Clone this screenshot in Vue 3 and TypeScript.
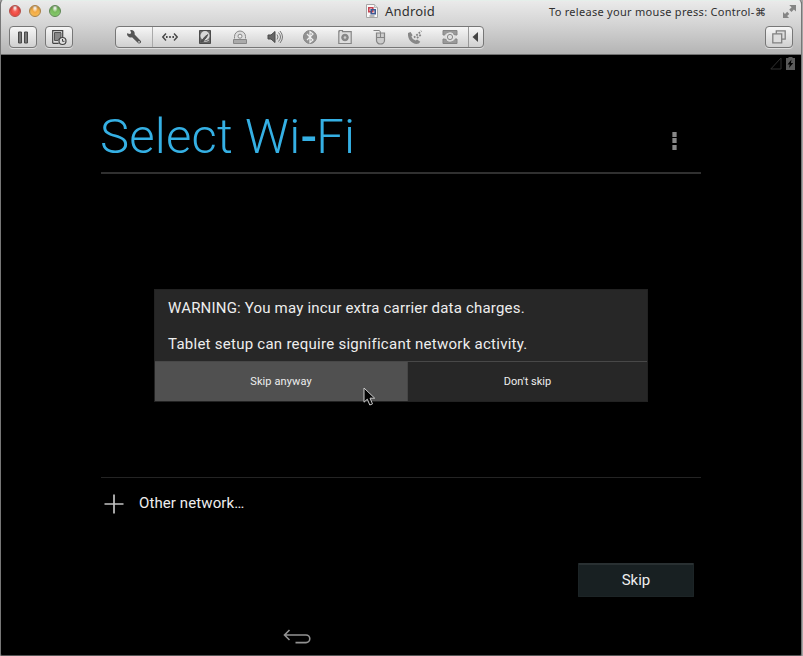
<script setup lang="ts">
const lights: string[] = ['red', 'amber', 'green']
const devices: string[] = ['network', 'disk', 'optical', 'sound', 'bluetooth', 'camera', 'mouse', 'phone', 'share']
</script>

<template>
  <div class="window">
    <header class="chrome">
      <div class="titlebar">
        <div class="lights">
          <i v-for="l in lights" :key="l" class="light" :class="l"></i>
        </div>
        <div class="title">
          <svg width="12" height="14" viewBox="0 0 12 14">
            <path d="M.5.5h8l3 3v10H.5z" fill="#f8f8f8" stroke="#a6a6a6" />
            <path d="M8.5.5v3h3" fill="#ddd" stroke="#aaa" stroke-width=".7" />
            <path d="M2.8 3.8h4v4h-4z" fill="none" stroke="#c64250" stroke-width="1.6" />
            <path d="M5.2 5.8h4v4h-4z" fill="none" stroke="#3c5790" stroke-width="1.6" />
            <path d="M3.5 12h5" stroke="#777" />
          </svg>
          <span>Android</span>
        </div>
        <div class="hint">To release your mouse press: Control-⌘</div>
        <svg class="expand" width="15" height="15" viewBox="0 0 15 15" fill="#858585">
          <path d="M7.2 1H14v6.5l-2.1-2.1L9.5 8 7.2 5.7l2.4-2.4zM1 8l2 2 2.2-2.2 2.1 2.1L5.1 12l2 2H1z" />
        </svg>
      </div>
      <div class="toolbar">
        <button class="btn pause" aria-label="Pause">
          <svg width="12" height="13" viewBox="0 0 12 13"><path d="M1.5 1h3v11h-3zM7.5 1h3v11h-3z" fill="#777" stroke="#484848" /></svg>
        </button>
        <button class="btn snap" aria-label="Snapshot">
          <svg width="16" height="17" viewBox="0 0 16 17">
            <path d="M1.7 14.3V1.7h10v7M1.7 14.3h6" fill="none" stroke="#444" stroke-width="1.2" />
            <path d="M3.5 3.5h6.5V8L7 11.5H3.5z" fill="#888" stroke="#555" />
            <circle cx="11.5" cy="12" r="3.5" fill="#ddd" stroke="#444" stroke-width="1.2" />
            <path d="M11.5 10v2.3h2" fill="none" stroke="#444" />
          </svg>
        </button>
        <div class="group">
          <span class="cell first">
            <svg width="16" height="16" viewBox="0 0 16 16"><path d="M1 4.2 4 5.1 5.2 3.9 4.2 1.2C7 .5 9.2 2.6 8.6 5.5l6 6.2c1.6 1.7-1 4-2.6 2.3L6 8.2C3.2 9.2.6 7 1 4.2z" fill="#555" /><circle cx="13" cy="12.9" r=".8" fill="#ddd" /></svg>
          </span>
          <span v-for="d in devices" :key="d" class="cell">
            <svg width="18" height="18" viewBox="0 0 18 18" fill="none" stroke="#858585">
              <g v-if="d === 'network'" stroke="#494949" stroke-width="1.5"><path d="M5 5.5 1.8 9 5 12.5M13 5.5 16.2 9 13 12.5" /><path d="M5 9h1.6M8.2 9h1.6M11.4 9H13" stroke-width="1.8" /></g>
              <g v-else-if="d === 'disk'"><path d="M3.5 2.5h11v13h-11z" fill="#666" stroke="#4b4b4b" /><circle cx="9" cy="7.7" r="4.6" fill="#d8d8d8" stroke="none" /><path d="m4.8 13.8 4-5 3-2.3-1.5 3.2-4.2 4.3z" fill="#555" stroke="#4b4b4b" stroke-width=".8" /><path d="M8 13.2q3 .8 5-1.2" stroke="#ccc" /></g>
              <g v-else-if="d === 'optical'" stroke="#888"><path d="M3.5 10.5v-2a5.5 5.5 0 0 1 11 0v2" fill="#ddd" /><circle cx="9" cy="8.2" r="2" fill="#eee" /><path d="M2.5 11.5h13v4h-13z" fill="#aaa" /></g>
              <g v-else-if="d === 'sound'" stroke="#777"><path d="M2 7h3l4-3.5v11L5 11H2z" fill="#666" stroke="#4a4a4a" /><path d="M11 6.5q2 2.5 0 5M12.5 4.5q4 4.5 0 9M14 3q5 6 0 12" /></g>
              <g v-else-if="d === 'bluetooth'"><circle cx="9" cy="9" r="6.5" fill="#929292" stroke="#858585" /><path d="m6 6 6 6-3 2.4V3.6L12 6l-6 6" stroke="#eee" stroke-width="1.2" /></g>
              <g v-else-if="d === 'camera'"><path d="M3.2 2.5h3.3v1.2h8.7v11.8H2.8V3.7h.4z" fill="#ddd" stroke-width="1.2" /><circle cx="9" cy="9.5" r="3.3" fill="#888" /><circle cx="9" cy="9.5" r="1.3" fill="#ccc" stroke="none" /></g>
              <g v-else-if="d === 'mouse'"><path d="M2.5 2.5H8q1.5 0 1.5 2.5" /><path d="M5.5 5h8v7.5a4 3.5 0 0 1-8 0z" fill="#ccc" stroke-width="1.2" /><path d="M9.5 5v4.5M5.5 9.5h8" /></g>
              <g v-else-if="d === 'phone'"><path d="M2 5 4.6 4l2 3.2-1.2 1.3q.8 3 4.2 4l1.5-1 3.2 2.3-1.5 1.8C7.3 17.4 1.2 12 2 5z" fill="#888" stroke="none" /><path d="M8 9.5 15.5 3M11 10l4-3.5" stroke-width="1.8" stroke-dasharray="1.8 1.3" /></g>
              <g v-else><path d="M2 2.5h14V7h-2.5A5 5 0 0 0 4.5 7H2zM2 15.5h14V11h-2.5a5 5 0 0 1-9 0H2z" fill="#999" stroke="#858585" /><path d="M4 10.5a5 5 0 0 1 8-4.5M14 7.5a5 5 0 0 1-8 4.5" stroke="#ddd" stroke-width="1.2" /><circle cx="9" cy="9" r="2.6" fill="#e0e0e0" stroke="#888" /></g>
            </svg>
          </span>
          <span class="cell last"><svg width="6" height="10" viewBox="0 0 6 10"><path d="M6 0v10L.5 5z" fill="#444" /></svg></span>
        </div>
        <button class="btn unity" aria-label="Unity">
          <svg width="14" height="14" viewBox="0 0 14 14" fill="#ddd" stroke="#808080" stroke-width="1.3"><path d="M4.3.8h8.9v8.4H4.3z" /><path d="M.8 3.8h8.9v9H.8z" /></svg>
        </button>
      </div>
    </header>

    <main class="screen">
      <div class="status">
        <svg width="12" height="13" viewBox="0 0 12 13"><path d="M11 1v11H.8z" fill="none" stroke="#303030" /></svg>
        <svg width="9" height="13" viewBox="0 0 9 13"><path d="M2.5 0h4v1H9v12H0V1h2.5z" fill="#5a5a5a" /><path d="M5.5 2.5 1.5 7.5h2.3L3 11l4.2-5H4.9z" fill="#000" /></svg>
      </div>
      <section class="setup">
        <div class="heading">
          <h1>Select Wi<span class="dash">-</span>Fi</h1>
          <span class="more"><i></i><i></i><i></i></span>
        </div>
        <div class="networks">
          <div class="dialog">
            <div class="message">
              <p class="warn">WARNING: You may incur extra carrier data charges.</p>
              <p class="need">Tablet setup can require significant network activity.</p>
            </div>
            <div class="choices">
              <button class="choice active"><span>Skip anyway</span>
                <svg class="pointer" width="13" height="20" viewBox="0 0 13 20"><path d="M1 1v14.2l3.3-3 2.5 5.8 2.7-1.1L7 11.2h4.7z" fill="#050505" stroke="#ccc" /></svg>
              </button>
              <button class="choice"><span>Don't skip</span></button>
            </div>
          </div>
        </div>
        <div class="other">
          <svg width="20" height="20" viewBox="0 0 20 20"><path d="M10 .5v19M.5 10h19" stroke="#c2c2c2" stroke-width="1.7" /></svg>
          <span>Other network…</span>
        </div>
        <div class="actions"><button class="skip"><span>Skip</span></button></div>
      </section>
      <nav class="navbar">
        <svg width="28" height="16" viewBox="0 0 28 16"><path d="M1.5 6H23a3.8 3.8 0 0 1 0 7.6H12.5M6.5 1l-5 5 5 5" fill="none" stroke="#929292" stroke-width="1.6" /></svg>
      </nav>
    </main>
  </div>
</template>

<style>
body { background: #a5a5a5; overflow: hidden; }
</style>

<style scoped>
* { box-sizing: border-box; }
button { padding: 0; margin: 0; border: 0; font: inherit; color: inherit; }
svg { display: block; flex: none; }
.window { width: 802px; height: 656px; border-left: 1px solid #777; border-right: 1px solid #777; border-bottom: 1px solid #555; border-radius: 4px 4px 2px 2px; overflow: hidden; background: #000; display: flex; flex-direction: column; }
.chrome { height: 55px; flex: none; background: linear-gradient(#ebebeb, #d4d4d4 45%, #b4b4b4); border-bottom: 1px solid #707070; box-shadow: inset 0 1px #e5efea; font-family: "Noto Sans", "Open Sans", sans-serif; color: #303030; }
.titlebar { height: 21px; display: flex; align-items: center; }
.lights { display: flex; gap: 8px; padding-left: 8px; }
.light { width: 12px; height: 12px; border-radius: 50%; box-shadow: inset 0 1px 2px rgba(0,0,0,.3); border: 1px solid; }
.red { background: radial-gradient(ellipse at 50% 15%, #fff 5%, #f5625a 35%, #f0483f 65%, #ffb0a4); border-color: #b34a44; }
.amber { background: radial-gradient(ellipse at 50% 15%, #fff 5%, #f1a844 40%, #f9b850 65%, #ffed9d); border-color: #a97e42; }
.green { background: radial-gradient(ellipse at 50% 15%, #fff 5%, #79b95d 40%, #82c868 65%, #d2f5b4); border-color: #5c8651; }
.title { margin-left: 305px; display: flex; align-items: center; gap: 7px; font-size: 13px; letter-spacing: .2px; width: 183px; }
.hint { font-size: 11px; letter-spacing: .29px; white-space: nowrap; width: 233px; padding-top: 1px; }
.expand { margin-top: 2px; }
.toolbar { display: flex; height: 32px; align-items: center; padding-left: 8px; }
.btn, .group { height: 22px; border: 1px solid #777; border-radius: 4px; background: linear-gradient(#f6f6f6, #d0d0d0); box-shadow: 0 1px #dedede; }
.btn { width: 28px; display: grid; place-items: center; }
.snap { margin-left: 8px; }
.group { display: flex; width: 369px; margin-left: 42px; }
.cell { width: 35px; padding-right: 2px; display: grid; place-items: center; flex: none; }
.cell.first { width: 37px; padding-right: 0; border-right: 1px solid #aaa; }
.cell.last { width: 15px; border-left: 1px solid #999; }
.unity { margin-left: 281px; }
.screen { flex: 1; display: flex; flex-direction: column; font-family: Roboto, sans-serif; color: #eee; }
.status { height: 18px; padding: 2px 6px 0 0; display: flex; justify-content: flex-end; gap: 4px; }
.setup { width: 600px; margin-left: 100px; }
.heading { height: 101px; display: flex; justify-content: space-between; border-bottom: 2px solid #303030; }
h1 { margin: 35px 0 0 -1px; font-size: 49px; line-height: 57px; font-weight: 300; color: #35b0e4; letter-spacing: .2px; white-space: nowrap; }
.dash { font-weight: 500; margin-right: -1px; }
.more { display: flex; flex-direction: column; gap: 1px; margin: 59px 24px 0 0; }
.more i { width: 5px; height: 5px; background: #888; border: solid #555; border-width: 0 1px; margin-bottom: .3px; }
.networks { height: 304px; padding: 115px 0 0 53px; border-bottom: 1px solid #242424; }
.dialog { width: 494px; height: 113px; background: #272727; border: 1px solid #222; display: flex; flex-direction: column; }
.message { height: 71px; padding: 8px 0 0 13px; font-size: 15px; line-height: 20px; white-space: nowrap; }
.message p { margin: 0 0 16px; }
.warn { letter-spacing: .19px; }
.need { letter-spacing: .26px; }
.choices { flex: 1; border-top: 1px solid #484848; display: flex; font-size: 11px; }
.choice { background: transparent; flex: 1; position: relative; }
.choice.active { background: #505050; flex: 0 0 253px; border-right: 1px solid #464646; letter-spacing: .1px; }
.pointer { position: absolute; left: 208px; top: 25px; }
.other { height: 52px; padding-left: 3px; display: flex; align-items: center; gap: 15px; font-size: 15px; letter-spacing: .1px; }
.other span { padding-bottom: 2px; }
.actions { height: 67px; padding: 33px 7px 0 0; display: flex; justify-content: flex-end; }
.skip { width: 116px; height: 34px; background: #182022; border: 1px solid #1c2426; border-top: 2px solid #293032; border-radius: 1px; font-size: 15px; }
.skip span { display: block; padding-bottom: 2px; }
.navbar { padding: 32px 0 0 282px; }
</style>
